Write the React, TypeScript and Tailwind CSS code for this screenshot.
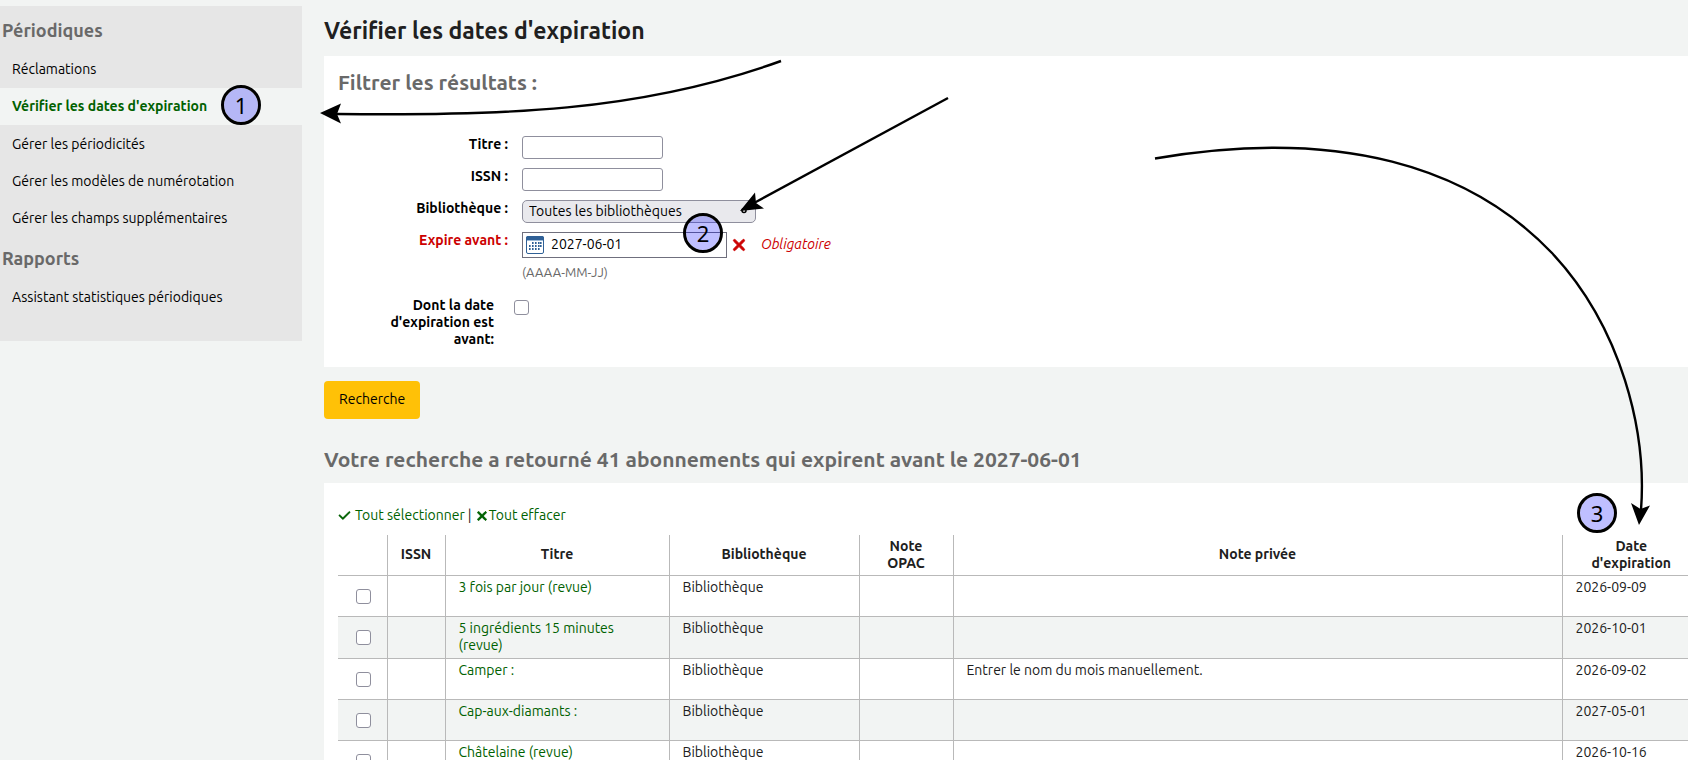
import React from 'react';
import { FaCheck, FaXmark } from 'react-icons/fa6';

interface Subscription {
    id: number;
    title: string;
    library: string;
    privateNote?: string;
    expiration: string;
}

const periodicals = [
    { label: 'Réclamations' },
    { label: "Vérifier les dates d'expiration", active: true },
    { label: 'Gérer les périodicités' },
    { label: 'Gérer les modèles de numérotation' },
    { label: 'Gérer les champs supplémentaires' },
];

const reports = [{ label: 'Assistant statistiques périodiques' }];

const subscriptions: Subscription[] = [
    { id: 1, title: '3 fois par jour (revue)', library: 'Bibliothèque', expiration: '2026-09-09' },
    { id: 2, title: '5 ingrédients 15 minutes (revue)', library: 'Bibliothèque', expiration: '2026-10-01' },
    { id: 3, title: 'Camper :', library: 'Bibliothèque', privateNote: 'Entrer le nom du mois manuellement.', expiration: '2026-09-02' },
    { id: 4, title: 'Cap-aux-diamants :', library: 'Bibliothèque', expiration: '2027-05-01' },
    { id: 5, title: 'Châtelaine (revue)', library: 'Bibliothèque', expiration: '2026-10-16' },
];

const checkboxClass = 'block size-[15px] appearance-none rounded-[3px] border border-[#8f8f9d] bg-white checked:bg-[#0060df]';

const NavList: React.FC<{ title: string; items: { label: string; active?: boolean }[] }> = ({ title, items }) => (
    <>
        <h2 className="pt-[9px] pb-[9px] pl-[2px] text-[18px] leading-6 font-bold text-[#696969]">{title}</h2>
        <ul>
            {items.map((item) => (
                <li key={item.label}>
                    <a
                        href="#"
                        className={`block h-[37px] pl-3 leading-[37px] ${
                            item.active ? 'mb-px bg-[#f2f4f3] font-bold text-[#006100]' : 'text-black'
                        }`}
                    >
                        {item.label}
                    </a>
                </li>
            ))}
        </ul>
    </>
);

const CalendarIcon = () => (
    <svg viewBox="0 0 18 18" className="size-[18px] shrink-0" aria-hidden="true">
        <rect x="0.5" y="0.5" width="17" height="17" rx="1.5" fill="#fff" stroke="#2f6096" />
        <path d="M0 2a2 2 0 0 1 2-2h14a2 2 0 0 1 2 2v2H0z" fill="#2f6096" />
        <path d="M1 4.5h16" stroke="#9dbbd8" />
        <g fill="#2f6096">
            {[6, 9, 12, 14].map((x) => <rect key={x} x={x} y="6" width="1.6" height="2" />)}
            {[3, 6, 9, 12, 14].map((x) => <rect key={x} x={x} y="9" width="1.6" height="2" />)}
            {[3, 6, 9, 12].map((x) => <rect key={x} x={x} y="12" width="1.6" height="2" />)}
        </g>
    </svg>
);

const Badge: React.FC<{ value: number; className: string }> = ({ value, className }) => (
    <span
        className={`absolute flex size-10 items-center justify-center rounded-full border-[3px] border-black bg-[#0000ff]/25 bg-clip-padding font-['Noto_Sans',sans-serif] text-[22px] leading-none text-black ${className}`}
    >
        {value}
    </span>
);

// Arrows drawn above the page
const Arrows = () => (
    <svg className="pointer-events-none absolute top-0 left-0" width="1688" height="760" viewBox="0 0 1688 760" aria-hidden="true">
        <g fill="none" stroke="#000" strokeWidth="2.4">
            <path d="M781 61C640 112 500 116 337 114" />
            <path d="M948 98L754 203" />
            <path d="M1155 158.5C1340 127 1470 167 1552 253C1622 328 1647 432 1641 510" />
        </g>
        <circle cx="744" cy="210.500" r="2" fill="#fff" stroke="#000" strokeWidth="1.500" />
        <path d="M320 113L341 103.500L337 114L341 123.500Z" />
        <path d="M740 211L755 192.500L756 203L764 208.500Z" />
        <path d="M1639 525L1631 503L1640.500 509L1650 505.500Z" />
    </svg>
);

const App: React.FC = () => {
    return (
        <div className="relative h-screen overflow-hidden bg-[#f2f4f3] pt-[6px] font-['Ubuntu','Noto_Sans',sans-serif] text-[14px] leading-[17px] text-[#202020]">
            <div className="flex items-start">
                <aside className="w-[302px] shrink-0 bg-[#e6e6e6] pt-[3px] pb-[25px]">
                    <NavList title="Périodiques" items={periodicals} />
                    <NavList title="Rapports" items={reports} />
                </aside>

                <main className="ml-[22px] min-w-0 flex-1">
                    <h1 className="h-[50px] text-[23px] leading-[50px] font-bold text-[#202020]">
                        Vérifier les dates d'expiration
                    </h1>

                    <form onSubmit={(e) => e.preventDefault()}>
                        <fieldset className="h-[311px] bg-white pl-[14px]">
                            <legend className="float-left w-full pt-3 pb-10 text-[21px] leading-7 font-bold text-[#696969]">
                                Filtrer les résultats :
                            </legend>

                            <div className="clear-both grid grid-cols-[170px_1fr] gap-x-[14px] text-black">
                                <label htmlFor="title" className="h-8 text-right font-bold">Titre :</label>
                                <input id="title" type="text" className="h-[23px] w-[141px] rounded-[3px] border border-[#8f8f9d] bg-white px-1" />

                                <label htmlFor="issn" className="h-8 text-right font-bold">ISSN :</label>
                                <input id="issn" type="text" className="h-[23px] w-[141px] rounded-[3px] border border-[#8f8f9d] bg-white px-1" />

                                <label htmlFor="branch" className="h-8 text-right font-bold">Bibliothèque :</label>
                                <select id="branch" className="h-[23px] w-[234px] appearance-none rounded-[5px] border border-[#8f8f9d] bg-[#e9e9ed] px-[6px] leading-[21px]">
                                    <option>Toutes les bibliothèques</option>
                                </select>

                                <label htmlFor="before" className="text-right font-bold text-[#cc0000]">Expire avant :</label>
                                <div>
                                    <div className="flex items-center">
                                        <div className="flex h-[26px] w-[205px] items-center gap-[7px] border border-[#6f6f7d] bg-white pl-[3px]">
                                            <CalendarIcon />
                                            <input id="before" type="text" defaultValue="2027-06-01" className="w-full min-w-0 bg-transparent pb-0.5 outline-none" />
                                        </div>
                                        <button type="button" aria-label="Effacer la date" className="ml-[3px] text-[#cc0000]">
                                            <FaXmark size={18} stroke="currentColor" strokeWidth={24} />
                                        </button>
                                        <span className="ml-[13px] pb-0.5 text-[#cc0000] italic">Obligatoire</span>
                                    </div>
                                    <div className="mt-[6px] text-[13px] text-[#696969]">(AAAA-MM-JJ)</div>
                                </div>
                            </div>

                            <div className="mt-4 flex gap-5 text-black">
                                <label htmlFor="expired" className="w-[156px] pl-9 text-right font-bold">
                                    Dont la date d'expiration est avant:
                                </label>
                                <input id="expired" type="checkbox" className={`${checkboxClass} mt-[3px]`} />
                            </div>
                        </fieldset>

                        <button type="submit" className="mt-[14px] block h-[38px] rounded-[4px] bg-[#ffc107] px-[15px] pb-0.5 text-black">
                            Recherche
                        </button>
                    </form>

                    <h2 className="mt-6 h-10 text-[21px] leading-8 font-bold text-[#696969]">
                        Votre recherche a retourné 41 abonnements qui expirent avant le 2027-06-01
                    </h2>

                    <section className="bg-white pt-6 pl-[14px]">
                        <div className="flex items-center gap-[3px] text-[#006100]">
                            <a href="#" className="flex items-center gap-1">
                                <FaCheck size={13} stroke="currentColor" strokeWidth={16} />
                                Tout sélectionner
                            </a>
                            <span className="text-[#202020]">|</span>
                            <a href="#" className="flex items-center">
                                <FaXmark size={14} stroke="currentColor" strokeWidth={36} />
                                Tout effacer
                            </a>
                        </div>

                        <table className="mt-[11px] w-full table-fixed border-collapse">
                            <colgroup>
                                <col className="w-[49px]" />
                                <col className="w-[58px]" />
                                <col className="w-[224px]" />
                                <col className="w-[190px]" />
                                <col className="w-[94px]" />
                                <col />
                                <col className="w-[126px]" />
                            </colgroup>
                            <thead>
                                <tr className="h-10 border-b border-[#b9b9b9] [&>th]:border-r [&>th]:border-[#b9b9b9] [&>th]:p-0 [&>th]:font-bold [&>th:last-child]:border-r-0">
                                    <th />
                                    <th>ISSN</th>
                                    <th>Titre</th>
                                    <th>Bibliothèque</th>
                                    <th>Note<br />OPAC</th>
                                    <th>Note privée</th>
                                    <th className="pl-3!">Date<br />d'expiration</th>
                                </tr>
                            </thead>
                            <tbody>
                                {subscriptions.map((sub) => (
                                    <tr
                                        key={sub.id}
                                        className="h-[41px] border-b border-[#b9b9b9] align-top even:bg-[#f2f4f3] [&>td]:border-r [&>td]:border-[#b9b9b9] [&>td]:pt-[3px] [&>td]:pr-3 [&>td]:pb-1 [&>td]:pl-[13px] [&>td:last-child]:border-r-0"
                                    >
                                        <td>
                                            <input type="checkbox" aria-label={sub.title} className={`${checkboxClass} mt-[10px] ml-[5px]`} />
                                        </td>
                                        <td />
                                        <td><a href="#" className="text-[#006100]">{sub.title}</a></td>
                                        <td>{sub.library}</td>
                                        <td />
                                        <td>{sub.privateNote}</td>
                                        <td>{sub.expiration}</td>
                                    </tr>
                                ))}
                            </tbody>
                        </table>
                    </section>
                </main>
            </div>

            {/* Numbered steps */}
            <Badge value={1} className="top-[85px] left-[221px]" />
            <Badge value={2} className="top-[213px] left-[683px]" />
            <Badge value={3} className="top-[493px] left-[1577px]" />
            <Arrows />
        </div>
    );
};

export default App;
